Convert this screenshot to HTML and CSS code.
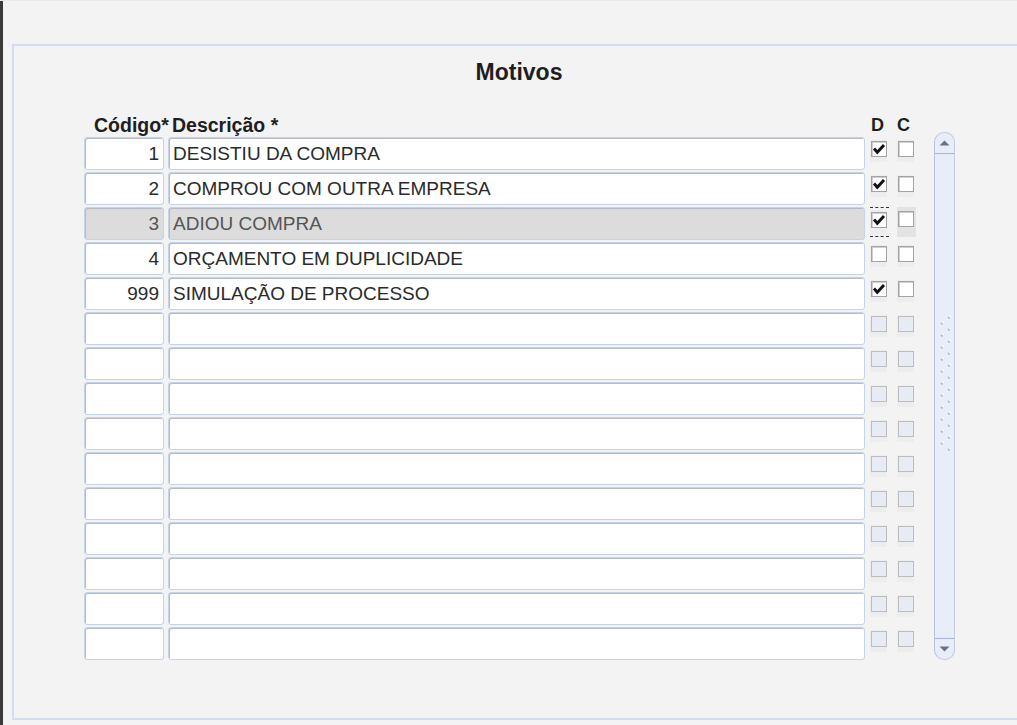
FILE: index.html
```html
<!DOCTYPE html>
<html lang="pt">
<head>
    <meta charset="UTF-8">
    <title>Motivos</title>
    <link rel="stylesheet" href="styles.css">
</head>
<body>
    <div class="side-strip"></div>
    <div class="main">
        <div class="panel">
            <h1 class="panel-title">Motivos</h1>

            <div class="table-area">
                <div class="grid">
                    <div class="row head">
                        <div class="col-code">Código*</div>
                        <div class="col-desc">Descrição *</div>
                        <div class="col-chk">D</div>
                        <div class="col-chk col-c">C</div>
                    </div>

                    <div class="row">
                        <div class="field code">1</div>
                        <div class="field desc">DESISTIU DA COMPRA</div>
                        <div class="chk-cell"><span class="chk on"></span></div>
                        <div class="chk-cell col-c"><span class="chk"></span></div>
                    </div>
                    <div class="row">
                        <div class="field code">2</div>
                        <div class="field desc">COMPROU COM OUTRA EMPRESA</div>
                        <div class="chk-cell"><span class="chk on"></span></div>
                        <div class="chk-cell col-c"><span class="chk"></span></div>
                    </div>
                    <div class="row selected">
                        <div class="field code">3</div>
                        <div class="field desc">ADIOU COMPRA</div>
                        <div class="chk-cell focused"><span class="chk on"></span></div>
                        <div class="chk-cell col-c shaded"><span class="chk"></span></div>
                    </div>
                    <div class="row">
                        <div class="field code">4</div>
                        <div class="field desc">ORÇAMENTO EM DUPLICIDADE</div>
                        <div class="chk-cell"><span class="chk"></span></div>
                        <div class="chk-cell col-c"><span class="chk"></span></div>
                    </div>
                    <div class="row">
                        <div class="field code">999</div>
                        <div class="field desc">SIMULAÇÃO DE PROCESSO</div>
                        <div class="chk-cell"><span class="chk on"></span></div>
                        <div class="chk-cell col-c"><span class="chk"></span></div>
                    </div>

                    <div class="row empty">
                        <div class="field code"></div><div class="field desc"></div>
                        <div class="chk-cell"><span class="chk off"></span></div>
                        <div class="chk-cell col-c"><span class="chk off"></span></div>
                    </div>
                    <div class="row empty">
                        <div class="field code"></div><div class="field desc"></div>
                        <div class="chk-cell"><span class="chk off"></span></div>
                        <div class="chk-cell col-c"><span class="chk off"></span></div>
                    </div>
                    <div class="row empty">
                        <div class="field code"></div><div class="field desc"></div>
                        <div class="chk-cell"><span class="chk off"></span></div>
                        <div class="chk-cell col-c"><span class="chk off"></span></div>
                    </div>
                    <div class="row empty">
                        <div class="field code"></div><div class="field desc"></div>
                        <div class="chk-cell"><span class="chk off"></span></div>
                        <div class="chk-cell col-c"><span class="chk off"></span></div>
                    </div>
                    <div class="row empty">
                        <div class="field code"></div><div class="field desc"></div>
                        <div class="chk-cell"><span class="chk off"></span></div>
                        <div class="chk-cell col-c"><span class="chk off"></span></div>
                    </div>
                    <div class="row empty">
                        <div class="field code"></div><div class="field desc"></div>
                        <div class="chk-cell"><span class="chk off"></span></div>
                        <div class="chk-cell col-c"><span class="chk off"></span></div>
                    </div>
                    <div class="row empty">
                        <div class="field code"></div><div class="field desc"></div>
                        <div class="chk-cell"><span class="chk off"></span></div>
                        <div class="chk-cell col-c"><span class="chk off"></span></div>
                    </div>
                    <div class="row empty">
                        <div class="field code"></div><div class="field desc"></div>
                        <div class="chk-cell"><span class="chk off"></span></div>
                        <div class="chk-cell col-c"><span class="chk off"></span></div>
                    </div>
                    <div class="row empty">
                        <div class="field code"></div><div class="field desc"></div>
                        <div class="chk-cell"><span class="chk off"></span></div>
                        <div class="chk-cell col-c"><span class="chk off"></span></div>
                    </div>
                    <div class="row empty">
                        <div class="field code"></div><div class="field desc"></div>
                        <div class="chk-cell"><span class="chk off"></span></div>
                        <div class="chk-cell col-c"><span class="chk off"></span></div>
                    </div>
                </div>

                <div class="scrollbar">
                    <div class="scroll-btn up">
                        <svg width="11" height="6" viewBox="0 0 11 6"><path d="M0.5 5.5 L5.5 0.5 L10.5 5.5 Z" fill="#6c7089"/></svg>
                    </div>
                    <div class="scroll-track">
                        <svg class="grip" width="21" height="136" viewBox="0 0 21 136">
                            <g id="dots">
                                <g fill="#aab5d0">
                                    <circle cx="8" cy="8.5" r="1.2"/><circle cx="8" cy="20.5" r="1.2"/><circle cx="8" cy="32.5" r="1.2"/><circle cx="8" cy="44.5" r="1.2"/><circle cx="8" cy="56.5" r="1.2"/><circle cx="8" cy="68.5" r="1.2"/><circle cx="8" cy="80.5" r="1.2"/><circle cx="8" cy="92.5" r="1.2"/><circle cx="8" cy="104.5" r="1.2"/><circle cx="8" cy="116.5" r="1.2"/><circle cx="8" cy="128.5" r="1.2"/>
                                    <circle cx="15" cy="2.5" r="1.2"/><circle cx="15" cy="14.5" r="1.2"/><circle cx="15" cy="26.5" r="1.2"/><circle cx="15" cy="38.5" r="1.2"/><circle cx="15" cy="50.5" r="1.2"/><circle cx="15" cy="62.5" r="1.2"/><circle cx="15" cy="74.5" r="1.2"/><circle cx="15" cy="86.5" r="1.2"/><circle cx="15" cy="98.5" r="1.2"/><circle cx="15" cy="110.5" r="1.2"/><circle cx="15" cy="122.5" r="1.2"/><circle cx="15" cy="134.5" r="1.2"/>
                                </g>
                                <g fill="#ffffff">
                                    <circle cx="9" cy="7.5" r="1"/><circle cx="9" cy="19.5" r="1"/><circle cx="9" cy="31.5" r="1"/><circle cx="9" cy="43.5" r="1"/><circle cx="9" cy="55.5" r="1"/><circle cx="9" cy="67.5" r="1"/><circle cx="9" cy="79.5" r="1"/><circle cx="9" cy="91.5" r="1"/><circle cx="9" cy="103.5" r="1"/><circle cx="9" cy="115.5" r="1"/><circle cx="9" cy="127.5" r="1"/>
                                    <circle cx="16" cy="1.5" r="1"/><circle cx="16" cy="13.5" r="1"/><circle cx="16" cy="25.5" r="1"/><circle cx="16" cy="37.5" r="1"/><circle cx="16" cy="49.5" r="1"/><circle cx="16" cy="61.5" r="1"/><circle cx="16" cy="73.5" r="1"/><circle cx="16" cy="85.5" r="1"/><circle cx="16" cy="97.5" r="1"/><circle cx="16" cy="109.5" r="1"/><circle cx="16" cy="121.5" r="1"/><circle cx="16" cy="133.5" r="1"/>
                                </g>
                            </g>
                        </svg>
                    </div>
                    <div class="scroll-btn down">
                        <svg width="11" height="6" viewBox="0 0 11 6"><path d="M0.5 0.5 L5.5 5.5 L10.5 0.5 Z" fill="#6c7089"/></svg>
                    </div>
                </div>
            </div>
        </div>
    </div>
</body>
</html>
```

FILE: styles.css
```css
* {
    margin: 0;
    padding: 0;
    box-sizing: border-box;
}

html, body {
    height: 100%;
}

body {
    font-family: "Liberation Sans", Arial, sans-serif;
    background: #f3f3f3;
    color: #2a2a2a;
    display: flex;
    overflow: hidden;
    border-top: 1px solid #e9ebee;
}

.side-strip {
    width: 3px;
    background: #3a3a3a;
    flex-shrink: 0;
}

.main {
    flex: 1;
    padding: 43px 0 0 9px;
}

.panel {
    width: 1012px;
    height: 676px;
    border: 2px solid #d3ddef;
    border-right: none;
}

.panel-title {
    text-align: center;
    font-size: 23px;
    font-weight: 700;
    line-height: 28px;
    color: #1e1e1e;
    padding-top: 12px;
}

.table-area {
    display: flex;
    align-items: flex-start;
    padding-left: 70px;
    margin-top: 29px;
}

.grid {
    display: flex;
    flex-direction: column;
}

.row {
    display: flex;
    height: 33px;
    margin-bottom: 2px;
}

.row.head {
    height: 22px;
    margin-bottom: 0;
    font-size: 19.5px;
    font-weight: 700;
    line-height: 20px;
    color: #1e1e1e;
}

.head .col-code {
    width: 88px;
    padding-left: 10px;
    white-space: nowrap;
}

.head .col-desc {
    width: 698px;
    white-space: nowrap;
}

.head .col-chk {
    width: 18px;
    padding-left: 1px;
    font-size: 18px;
}

.col-code, .col-desc {
    flex-shrink: 0;
}

.field {
    height: 33px;
    background: #fff;
    border: 1px solid #c4d2ea;
    border-radius: 3px;
    box-shadow: inset 1px 1px 0 #b7bcc4;
    font-size: 19px;
    line-height: 31px;
    white-space: nowrap;
    overflow: hidden;
}

.field.code {
    width: 80px;
    text-align: right;
    padding-right: 4px;
}

.field.desc {
    width: 697px;
    margin-left: 4px;
    padding-left: 4px;
}

.row.selected .field {
    background: #dcdcdc;
    color: #555;
}

.chk-cell {
    width: 19px;
    height: 30px;
    margin-left: 5px;
    padding: 4px 0 0 1px;
    background: linear-gradient(#ededed, #ededed) no-repeat 0 3px / 17px 22px;
}

.chk-cell.col-c,
.head .col-c {
    margin-left: 8px;
}

.chk-cell.focused {
    border-top: 1px dashed #333;
    border-bottom: 1px dashed #333;
    height: 30px;
    padding-top: 4px;
    background: linear-gradient(#ededed, #ededed) no-repeat 0 2px / 17px 24px;
}

.chk-cell.shaded {
    background: #e3e3e3;
    height: 30px;
}

.chk {
    display: block;
    width: 16px;
    height: 16px;
    background: #fff;
    border: 1px solid #a3a3a3;
    box-shadow: inset 1px 1px 0 #d0d0d0;
}

.chk.on {
    background: #fff url("data:image/svg+xml,%3Csvg xmlns='http://www.w3.org/2000/svg' width='14' height='14' viewBox='0 0 14 14'%3E%3Cpath d='M2 6.5 L5.3 10.3 L12 3' fill='none' stroke='%23111' stroke-width='2.9'/%3E%3C/svg%3E") no-repeat center;
}

.chk.off {
    background: #e6ebf4;
    border-color: #bdbdbd;
    box-shadow: none;
}

.scrollbar {
    width: 21px;
    height: 528px;
    margin-left: 18px;
    margin-top: 17px;
    display: flex;
    flex-direction: column;
    background: #e8edf7;
    border: 1px solid #c3cae6;
    border-left-color: #b8c0df;
    border-radius: 10px;
}

.scroll-btn {
    height: 21px;
    display: flex;
    align-items: center;
    justify-content: center;
    flex-shrink: 0;
}

.scroll-btn.up {
    border-bottom: 1px solid #a9b4d2;
}

.scroll-btn.down {
    border-top: 1px solid #a9b4d2;
}

.scroll-track {
    flex: 1;
    padding-top: 161px;
}

.grip {
    display: block;
    margin-left: -1px;
}
```
